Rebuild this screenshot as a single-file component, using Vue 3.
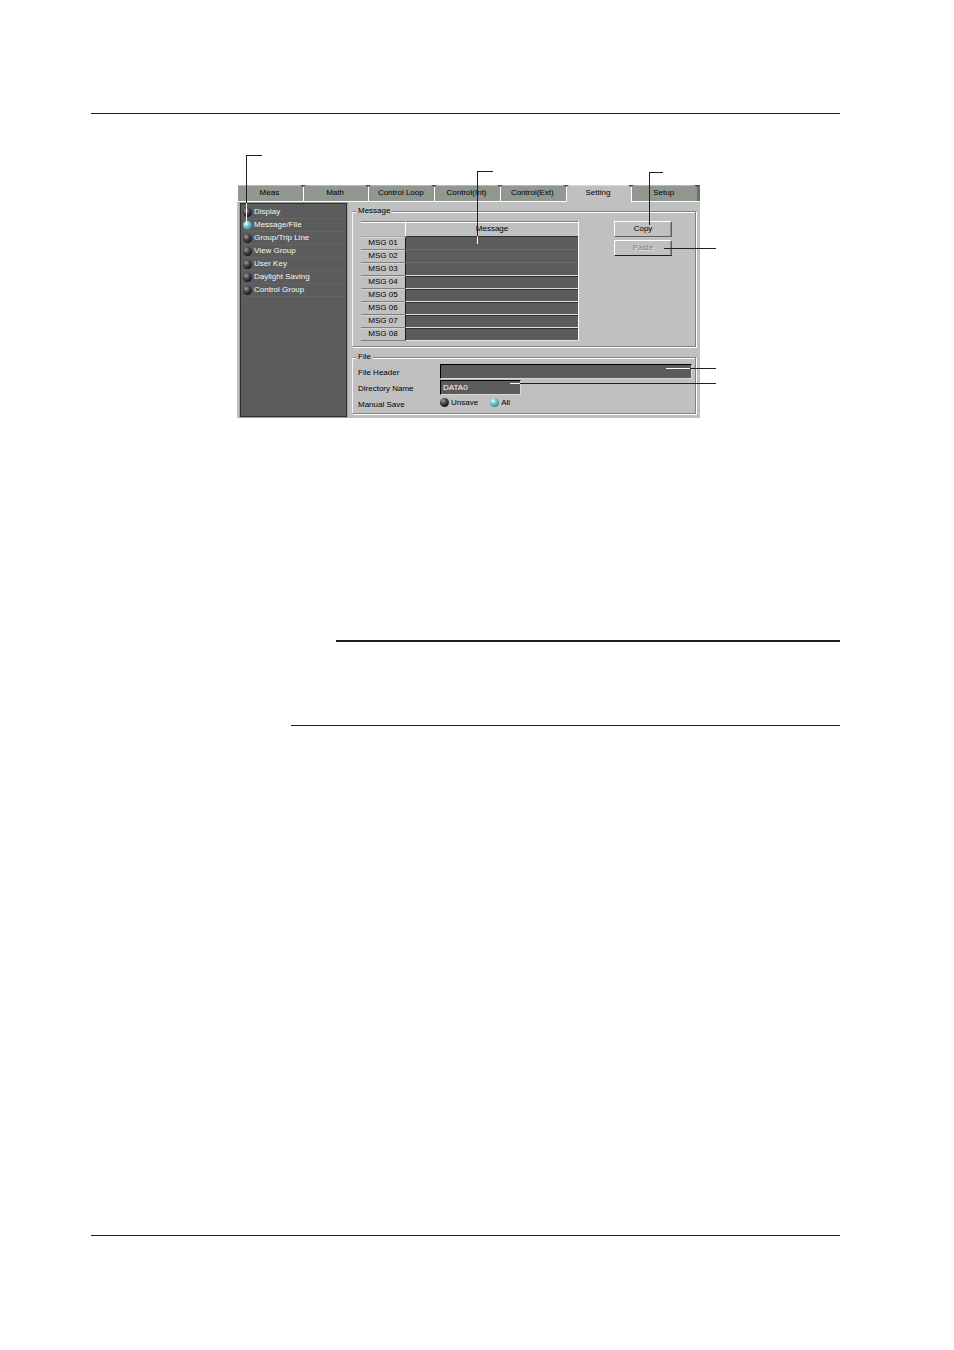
<template>
  <div class="page">
    <hr class="rule" />

    <div class="window">
      <div class="tabs">
        <button
          v-for="tab in tabs"
          :key="tab"
          type="button"
          class="tab"
          :class="{ active: tab === activeTab }"
          @click="activeTab = tab"
        >{{ tab }}</button>
      </div>

      <div class="body">
        <div class="sidebar">
          <label v-for="item in menu" :key="item" class="menu-item">
            <input v-model="activeItem" type="radio" name="menu" class="led" :value="item" />
            {{ item }}
          </label>
          <span class="callout callout-menu"></span>
        </div>

        <div class="content">
          <fieldset class="group message-group">
            <legend>Message</legend>
            <div class="message-row">
              <table class="messages">
                <thead>
                  <tr>
                    <th class="corner"></th>
                    <th class="heading">Message<span class="callout callout-message"></span></th>
                  </tr>
                </thead>
                <tbody>
                  <tr v-for="(message, i) in messages" :key="i">
                    <th><label :for="'msg' + i">MSG 0{{ i + 1 }}</label></th>
                    <td><input :id="'msg' + i" v-model="messages[i]" type="text" /></td>
                  </tr>
                </tbody>
              </table>
              <div class="actions">
                <div class="action">
                  <button type="button" class="push">Copy</button>
                  <span class="callout callout-copy"></span>
                </div>
                <div class="action">
                  <button type="button" class="push" disabled>Paste</button>
                  <span class="callout callout-paste"></span>
                </div>
              </div>
            </div>
          </fieldset>

          <fieldset class="group file-group">
            <legend>File</legend>
            <div class="field">
              <label for="header">File Header</label>
              <input id="header" v-model="fileHeader" type="text" class="text" />
              <span class="callout callout-header"></span>
            </div>
            <div class="field">
              <label for="directory">Directory Name</label>
              <input id="directory" v-model="directory" type="text" class="text short" />
              <span class="callout callout-directory"></span>
            </div>
            <div class="field" role="radiogroup" aria-labelledby="save-label">
              <span id="save-label" class="field-name">Manual Save</span>
              <div class="options">
                <label v-for="option in saveOptions" :key="option" class="option">
                  <input v-model="manualSave" type="radio" name="save" class="led" :value="option" />
                  {{ option }}
                </label>
              </div>
            </div>
          </fieldset>
        </div>
      </div>
    </div>

    <hr class="rule note-top" />
    <hr class="rule note-bottom" />
    <hr class="rule footer" />
  </div>
</template>

<script setup>
import { ref } from "vue";

const tabs = ["Meas", "Math", "Control Loop", "Control(Int)", "Control(Ext)", "Setting", "Setup"];
const activeTab = ref("Setting");

const menu = ["Display", "Message/File", "Group/Trip Line", "View Group", "User Key", "Daylight Saving", "Control Group"];
const activeItem = ref("Message/File");

const messages = ref(["", "", "", "", "", "", "", ""]);
const fileHeader = ref("");
const directory = ref("DATA0");

const saveOptions = ["Unsave", "All"];
const manualSave = ref("All");
</script>

<style>
body {
  background: #fff;
}
</style>

<style scoped>
* {
  box-sizing: border-box;
}

.page {
  min-height: 100vh;
  padding: 113px 114px 0 91px;
  font-family: "Liberation Sans", Arial, sans-serif;
  font-size: 8px;
  line-height: 12px;
  color: #000;
}

button, input {
  font: inherit;
  color: inherit;
  margin: 0;
  border-radius: 0;
}

.rule {
  height: 1px;
  margin: 0;
  border: none;
  background: #231f20;
}

.note-top {
  height: 2px;
  margin: 222px 0 0 245px;
}

.note-bottom {
  margin: 83px 0 0 200px;
}

.footer {
  margin-top: 509px;
}

.window {
  margin: 71px 140px 0 146px;
  background: #c0c0c0;
}

/* tabs */
.tabs {
  display: flex;
  padding-right: 3px;
  background: linear-gradient(#687068, #687068) right top / 3px 16px no-repeat, #fff;
}

.tab {
  position: relative;
  flex: 1 1 0;
  height: 17px;
  padding: 0 2px 0 0;
  border: solid #fff;
  border-width: 0 0 1px 1px;
  background: #909890;
  box-shadow: inset 0 1px #b4bcb4;
  white-space: nowrap;
}

.tab::after {
  content: "";
  position: absolute;
  top: 0;
  right: -3px;
  z-index: 1;
  border: solid transparent;
  border-width: 2px 3px 0;
  border-top-color: #485048;
}

.tab.active {
  background: #c0c0c0;
  border-bottom-color: #c0c0c0;
  box-shadow: inset 0 1px #d8d8d8;
}

.body {
  display: flex;
  gap: 5px;
  padding: 1px 4px 1px 3px;
}

/* sidebar */
.sidebar {
  position: relative;
  flex: none;
  width: 107px;
  padding: 2px;
  background: #5c5c5c;
  border: 1px solid #303030;
  box-shadow: 0 0 0 1px #a0a0a0;
  color: #f4f4f4;
}

.menu-item {
  display: flex;
  align-items: center;
  gap: 2px;
  height: 13px;
  border-bottom: 1px solid #646464;
}

.led {
  appearance: none;
  flex: none;
  width: 9px;
  height: 9px;
  border-radius: 50%;
  background: radial-gradient(circle at 35% 30%, #a0a0a0 0, #484848 35%, #161616 75%);
}

.led:checked {
  background: radial-gradient(circle at 35% 30%, #d8ffff 0, #5cbcbc 45%, #1c6068 95%);
}

/* groups */
.content {
  flex: 1;
  min-width: 0;
  padding: 2px 0 3px;
}

.group {
  min-width: 0;
  margin: 0;
  border: 1px solid #808080;
  border-left-color: #f4f4f4;
  box-shadow: 1px 1px #fff, inset 0 1px #fff;
}

.group legend {
  padding: 0 2px;
  background: #c0c0c0;
}

.message-group {
  padding: 4px 0 5px 3px;
}

.file-group {
  margin-top: 4px;
  padding: 1px 3px 1px;
}

.file-group .field {
  margin-left: 2px;
}

.message-row {
  display: flex;
  align-items: flex-start;
  gap: 35px;
  padding: 0 23px 0 5px;
}

/* message table */
.messages {
  flex: 1;
  table-layout: fixed;
  border-collapse: separate;
  border-spacing: 0;
  border-right: 1px solid #fff;
}

.messages th, .messages td {
  height: 13px;
  padding: 0;
  font-weight: normal;
  text-align: center;
}

.messages th {
  border-bottom: 1px solid #808080;
  box-shadow: inset 0 1px #d4d4d4;
  line-height: 12px;
}

.messages thead th {
  position: relative;
  height: 16px;
  border-top: 1px solid #808080;
  box-shadow: inset 0 1px #fff;
}

.messages .corner {
  width: 44px;
  border-bottom-color: #a8a8a8;
}

.messages .heading {
  border-left: 1px solid #fff;
  border-bottom-color: #303030;
}

.messages td {
  border-left: 1px solid #181818;
  border-top: 1px solid #303030;
  border-bottom: 1px solid #e0e0e0;
  background: #5c5c5c;
}

.messages tr:nth-child(-n + 2) td {
  border-bottom-color: #6c6c6c;
}

.messages tr:nth-child(-n + 3) td {
  border-top-color: #5c5c5c;
}

.messages td input {
  display: block;
  width: 100%;
  height: 11px;
  padding: 0 2px;
  border: none;
  background: none;
  color: #fff;
}

/* push buttons */
.actions {
  display: flex;
  flex-direction: column;
  flex: none;
  gap: 3px;
  width: 58px;
}

.action {
  position: relative;
}

.push {
  display: block;
  width: 100%;
  height: 16px;
  padding: 0;
  border: 1px solid;
  border-color: #fff #606060 #606060 #fff;
  background: #c0c0c0;
  box-shadow: inset -1px 0 #909090;
}

.push:disabled {
  border-bottom-color: #202020;
  color: #808080;
  text-shadow: 1px 1px #e4e4e4;
}

/* file fields */
.field {
  position: relative;
  display: flex;
  align-items: flex-start;
  height: 16px;
}

.field > label, .field-name {
  flex: none;
  width: 82px;
  line-height: 17px;
}

.text {
  flex: 1;
  min-width: 0;
  height: 15px;
  padding: 0 2px;
  border: 1px solid #d8d8d8;
  border-top: 1px solid #000;
  border-left: 1px solid #000;
  background: #5c5c5c;
  color: #fff;
}

.text.short {
  flex: 0 0 81px;
}

.options {
  display: flex;
  gap: 12px;
}

.option {
  display: flex;
  align-items: center;
  gap: 2px;
  height: 13px;
}

/* leader lines, white where they run over a dark field */
.callout {
  position: absolute;
  z-index: 2;
  pointer-events: none;
}

.callout::before {
  content: "";
  position: absolute;
}

.callout-menu {
  left: 5px;
  top: -49px;
  width: 16px;
  height: 48px;
  border: solid #231f20;
  border-width: 1px 0 0 1px;
}

.callout-menu::before {
  left: -1px;
  top: 47px;
  width: 1px;
  height: 22px;
  background: #fff;
}

.callout-message {
  left: 41%;
  top: -51px;
  width: 16px;
  height: 65px;
  border: solid #231f20;
  border-width: 1px 0 0 1px;
}

.callout-message::before {
  left: -1px;
  top: 64px;
  width: 1px;
  height: 8px;
  background: #fff;
}

.callout-copy {
  left: 35px;
  top: -49px;
  width: 14px;
  height: 53px;
  border: solid #231f20;
  border-width: 1px 0 0 1px;
}

.callout-paste {
  left: 50px;
  right: -44px;
  top: 8px;
  height: 1px;
  background: #231f20;
}

.callout-header, .callout-directory {
  right: -24px;
  top: 4px;
  height: 1px;
  background: #231f20;
}

.callout-header {
  width: 26px;
}

.callout-header::before {
  right: 100%;
  width: 24px;
  height: 1px;
  background: #fff;
}

.callout-directory {
  left: 162px;
  top: 3px;
}

.callout-directory::before {
  right: 100%;
  width: 10px;
  height: 1px;
  background: #fff;
}
</style>
